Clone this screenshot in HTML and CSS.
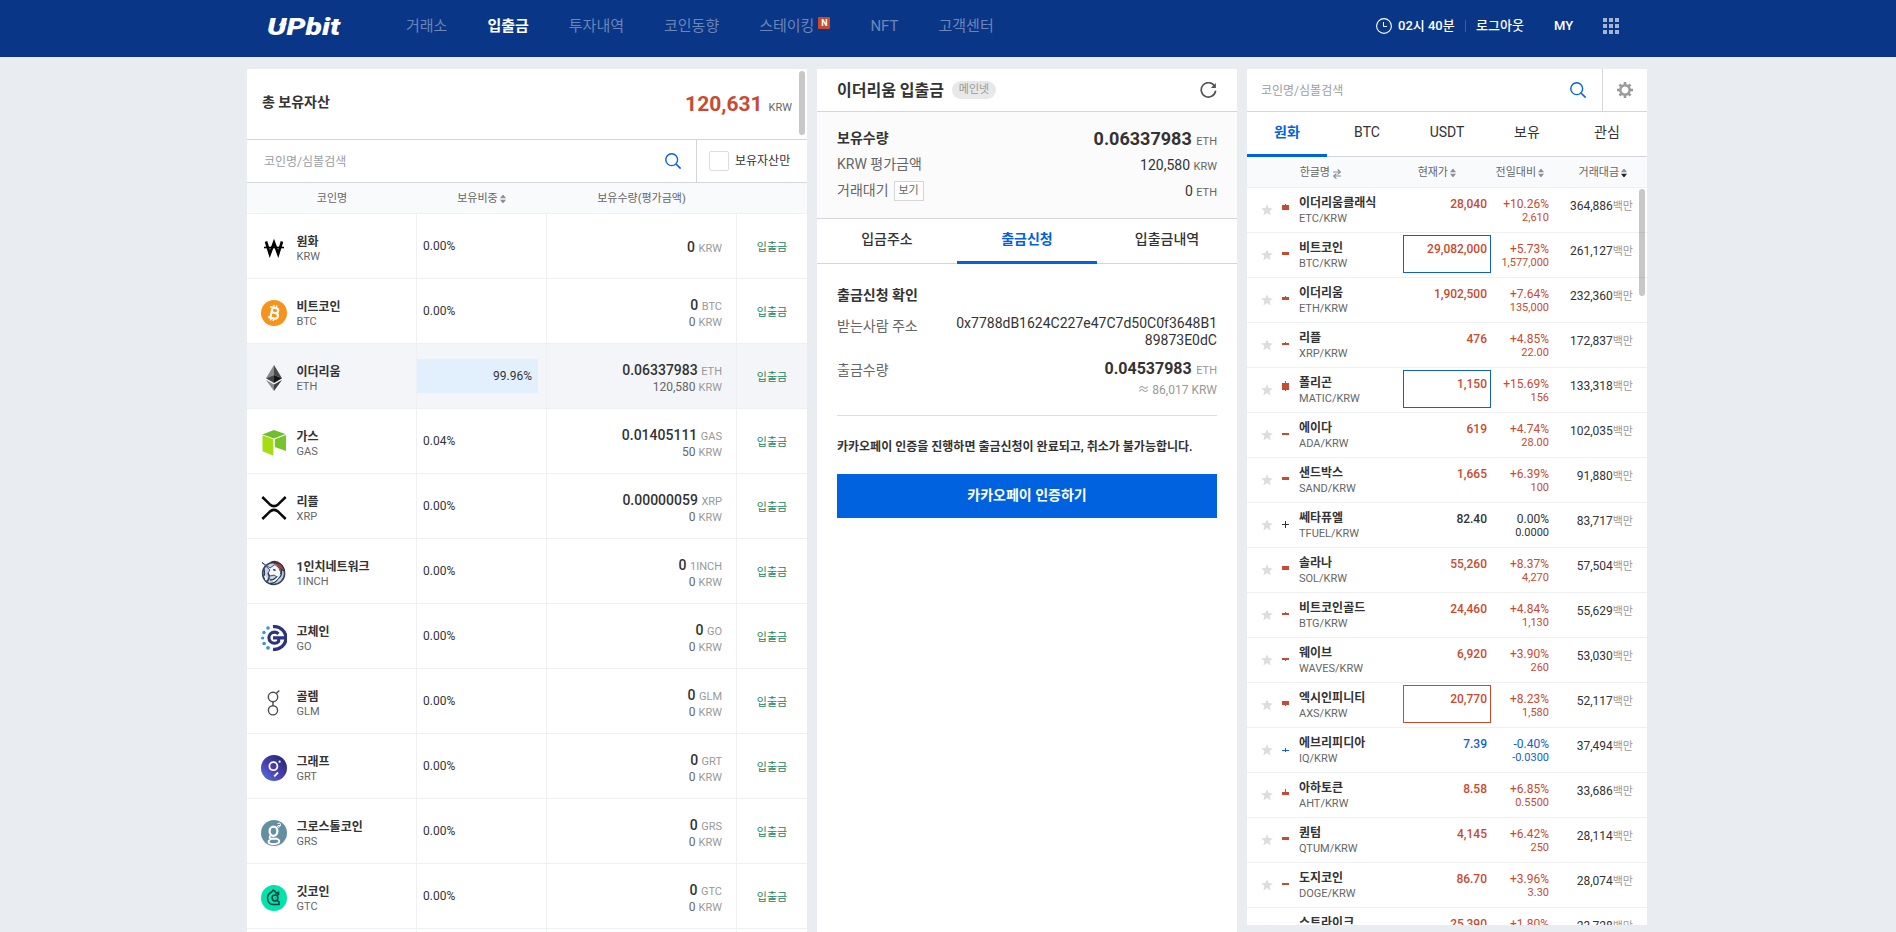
FILE: index.html
```html
<!DOCTYPE html>
<html lang="ko">
<head>
<meta charset="utf-8">
<title>입출금</title>
<link rel="stylesheet" href="styles.css">
</head>
<body>
<svg class="defs" width="0" height="0">
  <symbol id="search" viewBox="0 0 16 16"><circle cx="6.7" cy="6.7" r="5.9" fill="none" stroke="#0062df" stroke-width="1.4"/><path d="M11 11l4.6 4.6" stroke="#0062df" stroke-width="1.6"/></symbol>
  <symbol id="sort" viewBox="0 0 6 8"><path d="M0 3.2L2.5 0h1L6 3.2z" fill="#8e8e99"/><path class="down" d="M0 4.8L2.5 8h1L6 4.8z"/></symbol>
  <symbol id="star" viewBox="0 0 12 12"><path d="M6 .2L7.6 4.1L11.9 4.4L8.6 7.1L9.7 11.5L6 9.1L2.3 11.5L3.4 7.1L.1 4.4L4.4 4.1z" fill="#ddd"/></symbol>
</svg>
<header class="top">
  <div class="logo"><svg width="78" height="28" viewBox="0 0 78 28"><text x="0" y="22.5" textLength="73" lengthAdjust="spacingAndGlyphs">UPbit</text><path d="M11.5 13.5L17 6.5H20L17.5 11.5H20L14.5 18L16 13.5z" fill="#fff"/></svg></div>
  <nav class="menu">
    <a>거래소</a><a class="on">입출금</a><a>투자내역</a><a>코인동향</a><a>스테이킹<i class="new">N</i></a><a>NFT</a><a>고객센터</a>
  </nav>
  <div class="user">
    <svg width="16" height="16" viewBox="0 0 16 16"><circle cx="8" cy="8" r="7.4" fill="none" stroke="#fff" stroke-width="1.1"/><path d="M7.5 4v4.5h3.5" fill="none" stroke="#fff"/></svg>
    <b class="time">02시 40분</b><span class="bar"></span><b class="logout">로그아웃</b><b class="my">MY</b>
    <svg class="apps" width="16" height="16" viewBox="0 0 16 16"><path fill="#a5b4d3" d="M0 0h4v4H0zM6 0h4v4H6zM12 0h4v4h-4zM0 6h4v4H0zM6 6h4v4H6zM12 6h4v4h-4zM0 12h4v4H0zM6 12h4v4H6zM12 12h4v4h-4z"/></svg>
  </div>
</header>
<main class="page">
<section class="panel assets">
  <div class="scroll s1"></div>
  <div class="total"><strong>총 보유자산</strong><p><b>120,631</b><span>KRW</span></p></div>
  <div class="find"><div class="field"><span>코인명/심볼검색</span><svg width="16" height="16"><use href="#search"/></svg></div><label><i></i>보유자산만</label></div>
  <div class="arow ahead"><span>코인명</span><span>보유비중<svg class="sort" width="6" height="8"><use href="#sort"/></svg></span><span>보유수량(평가금액)</span><span></span></div>

  <div class="arow"><div class="coin"><svg width="26" height="26" viewBox="0 0 26 26"><path d="M5 6.5L8.8 19L13 7.5L17.2 19L21 6.5" fill="none" stroke="#000" stroke-width="2.6"/><path d="M3 12.5h20" stroke="#000" stroke-width="1.6"/></svg><p><b>원화</b><span>KRW</span></p></div><div class="rate">0.00%</div><div class="amt"><p>0 <i>KRW</i></p></div><div class="act">입출금</div></div>
  <div class="arow"><div class="coin"><svg width="26" height="26" viewBox="0 0 26 26"><circle cx="13" cy="13" r="13" fill="#f7931a"/><g transform="rotate(13 13 13)" fill="none" stroke="#fff"><path d="M10.4 7.6v10.8M8 7.9h6.2a2.4 2.4 0 0 1 0 4.9h-3.6M10.6 12.8h4.2a2.7 2.7 0 0 1 0 5.4H8" stroke-width="2.1"/><path d="M11.3 5v2.8M14 5v2.8M11.3 18v3M14 18v3" stroke-width="1.5"/></g></svg><p><b>비트코인</b><span>BTC</span></p></div><div class="rate">0.00%</div><div class="amt"><p>0 <i>BTC</i></p><p class="krw">0 <i>KRW</i></p></div><div class="act">입출금</div></div>
  <div class="arow sel"><div class="coin"><svg width="26" height="26" viewBox="0 0 26 26"><path d="M13 0L5 13.2L13 10z" fill="#8a8a8a"/><path d="M13 0L21 13.2L13 10z" fill="#4a4a4a"/><path d="M5 13.2L13 10V18z" fill="#454545"/><path d="M21 13.2L13 10V18z" fill="#141418"/><path d="M5 15L13 19.6V26z" fill="#8a8a8a"/><path d="M21 15L13 19.6V26z" fill="#404040"/></svg><p><b>이더리움</b><span>ETH</span></p></div><div class="rate full"><span>99.96%</span></div><div class="amt"><p>0.06337983 <i>ETH</i></p><p class="krw">120,580 <i>KRW</i></p></div><div class="act">입출금</div></div>
  <div class="arow"><div class="coin"><svg width="26" height="26" viewBox="0 0 26 26"><path d="M1.5 4.4L12.8 0L24.5 4L13 8.5z" fill="#6fbf2c"/><path d="M1.5 5.2L12.3 9.3V25.8L1.5 21.2z" fill="#a6dc13"/><path d="M25 5V21L13.8 17V9.2z" fill="#78c52b"/></svg><p><b>가스</b><span>GAS</span></p></div><div class="rate">0.04%</div><div class="amt"><p>0.01405111 <i>GAS</i></p><p class="krw">50 <i>KRW</i></p></div><div class="act">입출금</div></div>
  <div class="arow"><div class="coin"><svg width="26" height="26" viewBox="0 0 26 26" fill="none" stroke="#0a0a0a" stroke-width="2.5"><path d="M1.3 2L8.6 9.2Q13 13 17.4 9.2L24.7 2M1.3 24L8.6 16.8Q13 13 17.4 16.8L24.7 24"/></svg><p><b>리플</b><span>XRP</span></p></div><div class="rate">0.00%</div><div class="amt"><p>0.00000059 <i>XRP</i></p><p class="krw">0 <i>KRW</i></p></div><div class="act">입출금</div></div>
  <div class="arow"><div class="coin"><svg width="26" height="26" viewBox="0 0 26 26"><circle cx="12.6" cy="13.4" r="11" fill="#c9d2dd" stroke="#33435c" stroke-width="1.5"/><path d="M9 2Q15 -1 20 3.5Q24 7 24 12L20 10L16 5z" fill="#3d3440"/><path d="M13 2.5L20 5L23 10L18.5 8z" fill="#a5403a"/><path d="M1 2.5L9 8L14 4.5L18 8L20 13L16 17L13 15L9 16L7 13L9 10z" fill="#f5f8fb" stroke="#2e405c" stroke-width=".9"/><path d="M7 13Q10 19 5 22M20 9Q22 16 17 18.5Q15 23 9 23.5M16 17Q13 20 9 20M3 9Q4 15 2.5 17" fill="none" stroke="#2b3d5a" stroke-width="1.4"/><path d="M3.5 16Q6 18 4.5 20M18.5 14Q17 19 12 21.5" fill="none" stroke="#f5f8fb" stroke-width="1.4"/><path d="M12.3 9.5l2.2.8" stroke="#222" stroke-width="1.4"/></svg><p><b>1인치네트워크</b><span>1INCH</span></p></div><div class="rate">0.00%</div><div class="amt"><p>0 <i>1INCH</i></p><p class="krw">0 <i>KRW</i></p></div><div class="act">입출금</div></div>
  <div class="arow"><div class="coin"><svg width="26" height="26" viewBox="0 0 26 26"><path d="M12 1.7a11.4 11.4 0 1 1 0 22.6" fill="none" stroke="#2b3280" stroke-width="3.3"/><path d="M17.5 8.8A5.6 5.6 0 1 0 17.6 16.5L17.8 13M12 12.9H24" fill="none" stroke="#2b3280" stroke-width="3.1"/><g fill="#3597d6"><circle cx="7" cy="3" r="1.8"/><circle cx="3" cy="7.5" r="1.7"/><circle cx="1.6" cy="13" r="1.6"/><circle cx="3.1" cy="18.5" r="1.8"/><circle cx="7" cy="22.8" r="1.9"/></g></svg><p><b>고체인</b><span>GO</span></p></div><div class="rate">0.00%</div><div class="amt"><p>0 <i>GO</i></p><p class="krw">0 <i>KRW</i></p></div><div class="act">입출금</div></div>
  <div class="arow"><div class="coin"><svg width="26" height="26" viewBox="0 0 26 26" fill="none" stroke="#4c4c4c" stroke-width="1.4"><circle cx="12" cy="7" r="4.7"/><circle cx="12" cy="20.3" r="4.6"/><path d="M12 11.7v4M15.2 3.6L18.3 .5"/></svg><p><b>골렘</b><span>GLM</span></p></div><div class="rate">0.00%</div><div class="amt"><p>0 <i>GLM</i></p><p class="krw">0 <i>KRW</i></p></div><div class="act">입출금</div></div>
  <div class="arow"><div class="coin"><svg width="26" height="26" viewBox="0 0 26 26"><defs><linearGradient id="g" x1="0" y1="1" x2=".8" y2=".1"><stop offset="0" stop-color="#4385dc"/><stop offset=".45" stop-color="#5044bd"/><stop offset="1" stop-color="#292a78"/></linearGradient></defs><circle cx="13" cy="13" r="13" fill="url(#g)"/><g fill="none" stroke="#fff" stroke-width="1.8"><circle cx="12.4" cy="11.2" r="4"/><path d="M13.2 21.3L17 17.5"/></g><circle cx="18.6" cy="6.7" r="1.1" fill="#fff"/></svg><p><b>그래프</b><span>GRT</span></p></div><div class="rate">0.00%</div><div class="amt"><p>0 <i>GRT</i></p><p class="krw">0 <i>KRW</i></p></div><div class="act">입출금</div></div>
  <div class="arow"><div class="coin"><svg width="26" height="26" viewBox="0 0 26 26"><circle cx="13" cy="13" r="13" fill="#648fa1"/><g fill="none" stroke="#fff"><ellipse cx="12.5" cy="11.2" rx="3.9" ry="4.6" stroke-width="2.3"/><path d="M9.5 15.5Q7.5 18 10 18.8H16Q19.5 20 17.5 23Q12 25.5 8 23Q6.5 21 10 19" stroke-width="1.9"/><path d="M15.3 8L17 5.5H19.5M16.5 3.5q3-1.4 3 1t-2.5 3" stroke-width="1"/></g></svg><p><b>그로스톨코인</b><span>GRS</span></p></div><div class="rate">0.00%</div><div class="amt"><p>0 <i>GRS</i></p><p class="krw">0 <i>KRW</i></p></div><div class="act">입출금</div></div>
  <div class="arow"><div class="coin"><svg width="26" height="26" viewBox="0 0 26 26"><circle cx="13" cy="13" r="13" fill="#02e2ac"/><g fill="none" stroke="#0d3d3d" stroke-width="1.5"><path d="M17.5 9.5V7.3L15.2 8.2L14 6.3L12.2 5L10.7 7Q6.2 9 6.6 13.5Q7 19.3 12 19.6H18V16"/><circle cx="14" cy="13" r="2.9"/><path d="M14 13h.5M15.8 10.8L18 9M15.8 15.2L18 17"/></g></svg><p><b>깃코인</b><span>GTC</span></p></div><div class="rate">0.00%</div><div class="amt"><p>0 <i>GTC</i></p><p class="krw">0 <i>KRW</i></p></div><div class="act">입출금</div></div>
  <div class="arow"><div class="coin"></div><div class="rate"></div><div class="amt"></div><div class="act"></div></div>
</section>

<section class="panel detail">
  <div class="title"><h2>이더리움 입출금</h2><span class="net">메인넷</span><svg width="17" height="17" viewBox="0 0 17 17"><path d="M14.7 4.3A7.2 7.2 0 1 0 15.6 8.6" fill="none" stroke="#555" stroke-width="1.7"/><path d="M15.9 .9V6H10.8z" fill="#555"/></svg></div>
  <div class="sum">
    <div class="sline"><strong>보유수량</strong><p><b>0.06337983</b> <i>ETH</i></p></div>
    <div class="sline"><span>KRW 평가금액</span><p>120,580 <i>KRW</i></p></div>
    <div class="sline"><span>거래대기<em>보기</em></span><p>0 <i>ETH</i></p></div>
  </div>
  <div class="tabs t3"><span>입금주소</span><span class="on">출금신청</span><span>입출금내역</span></div>
  <div class="confirm">
    <h3>출금신청 확인</h3>
    <div class="cline addr"><span>받는사람 주소</span><p>0x7788dB1624C227e47C7d50C0f3648B1<br>89873E0dC</p></div>
    <div class="cline qty"><span>출금수량</span><p><b>0.04537983</b> <i>ETH</i><small><i class="approx">≈</i> 86,017 KRW</small></p></div>
    <p class="note">카카오페이 인증을 진행하면 출금신청이 완료되고, 취소가 불가능합니다.</p>
    <button>카카오페이 인증하기</button>
  </div>
</section>

<section class="panel market">
  <div class="scroll s2"></div>
  <div class="find mfind"><div class="field"><span>코인명/심볼검색</span><svg width="16" height="16"><use href="#search"/></svg></div><div class="gear"><svg width="16" height="16" viewBox="-8 -8 16 16"><circle r="4.7" fill="none" stroke="#999" stroke-width="2.4"/><path d="M0-8V-5M0 8V5M-8 0H-5M8 0H5M-5.5-5.5L-3.8-3.8M5.5 5.5L3.8 3.8M-5.5 5.5L-3.8 3.8M5.5-5.5L3.8-3.8" stroke="#999" stroke-width="2.6"/></svg></div></div>
  <div class="tabs t5"><span class="on">원화</span><span>BTC</span><span>USDT</span><span>보유</span><span>관심</span></div>
  <div class="mhead"><span>한글명<svg class="swap" width="8" height="10" viewBox="0 0 8 10"><path d="M0 3H7M4.6 .4L7.3 3L4.6 5.4M8 7H1M3.4 4.8L.7 7L3.4 9.8" fill="none" stroke="#8e8e99" stroke-width="1.2"/></svg></span><span>현재가<svg class="sort" width="6" height="8"><use href="#sort"/></svg></span><span>전일대비<svg class="sort" width="6" height="8"><use href="#sort"/></svg></span><span>거래대금<svg class="sort dark" width="6" height="8"><use href="#sort"/></svg></span></div>
  <div class="mlist">
  <div class="mrow up"><svg class="star"><use href="#star"/></svg><svg class="candle"><path d="M0 17h7v5H0zM3 16h1v1H3z"/></svg><p class="nm"><b>이더리움클래식</b><span>ETC/KRW</span></p><p class="pr">28,040</p><p class="ch">+10.26%<span>2,610</span></p><p class="vol">364,886<i>백만</i></p></div>
  <div class="mrow up"><svg class="star"><use href="#star"/></svg><svg class="candle"><path d="M0 19h7v3H0z"/></svg><p class="nm"><b>비트코인</b><span>BTC/KRW</span></p><p class="pr boxb">29,082,000</p><p class="ch">+5.73%<span>1,577,000</span></p><p class="vol">261,127<i>백만</i></p></div>
  <div class="mrow up"><svg class="star"><use href="#star"/></svg><svg class="candle"><path d="M0 19h7v3H0zM3 18h1v1H3z"/></svg><p class="nm"><b>이더리움</b><span>ETH/KRW</span></p><p class="pr">1,902,500</p><p class="ch">+7.64%<span>135,000</span></p><p class="vol">232,360<i>백만</i></p></div>
  <div class="mrow up"><svg class="star"><use href="#star"/></svg><svg class="candle"><path d="M0 20h7v2H0zM3 19h1v1H3z"/></svg><p class="nm"><b>리플</b><span>XRP/KRW</span></p><p class="pr">476</p><p class="ch">+4.85%<span>22.00</span></p><p class="vol">172,837<i>백만</i></p></div>
  <div class="mrow up"><svg class="star"><use href="#star"/></svg><svg class="candle"><path d="M0 15h7v7H0zM3 13h1v10H3z"/></svg><p class="nm"><b>폴리곤</b><span>MATIC/KRW</span></p><p class="pr boxb">1,150</p><p class="ch">+15.69%<span>156</span></p><p class="vol">133,318<i>백만</i></p></div>
  <div class="mrow up"><svg class="star"><use href="#star"/></svg><svg class="candle"><path d="M0 20h7v2H0z"/></svg><p class="nm"><b>에이다</b><span>ADA/KRW</span></p><p class="pr">619</p><p class="ch">+4.74%<span>28.00</span></p><p class="vol">102,035<i>백만</i></p></div>
  <div class="mrow up"><svg class="star"><use href="#star"/></svg><svg class="candle"><path d="M0 19h7v3H0z"/></svg><p class="nm"><b>샌드박스</b><span>SAND/KRW</span></p><p class="pr">1,665</p><p class="ch">+6.39%<span>100</span></p><p class="vol">91,880<i>백만</i></p></div>
  <div class="mrow"><svg class="star"><use href="#star"/></svg><svg class="candle"><path d="M0 21h7v1H0zM3 18h1v7H3z"/></svg><p class="nm"><b>쎄타퓨엘</b><span>TFUEL/KRW</span></p><p class="pr">82.40</p><p class="ch">0.00%<span>0.0000</span></p><p class="vol">83,717<i>백만</i></p></div>
  <div class="mrow up"><svg class="star"><use href="#star"/></svg><svg class="candle"><path d="M0 18h7v4H0z"/></svg><p class="nm"><b>솔라나</b><span>SOL/KRW</span></p><p class="pr">55,260</p><p class="ch">+8.37%<span>4,270</span></p><p class="vol">57,504<i>백만</i></p></div>
  <div class="mrow up"><svg class="star"><use href="#star"/></svg><svg class="candle"><path d="M0 20h7v2H0zM3 19h1v1H3z"/></svg><p class="nm"><b>비트코인골드</b><span>BTG/KRW</span></p><p class="pr">24,460</p><p class="ch">+4.84%<span>1,130</span></p><p class="vol">55,629<i>백만</i></p></div>
  <div class="mrow up"><svg class="star"><use href="#star"/></svg><svg class="candle"><path d="M0 20h7v2H0zM3 22h1v1H3z"/></svg><p class="nm"><b>웨이브</b><span>WAVES/KRW</span></p><p class="pr">6,920</p><p class="ch">+3.90%<span>260</span></p><p class="vol">53,030<i>백만</i></p></div>
  <div class="mrow up"><svg class="star"><use href="#star"/></svg><svg class="candle"><path d="M0 18h7v4H0zM3 22h1v1H3z"/></svg><p class="nm"><b>엑시인피니티</b><span>AXS/KRW</span></p><p class="pr boxr">20,770</p><p class="ch">+8.23%<span>1,580</span></p><p class="vol">52,117<i>백만</i></p></div>
  <div class="mrow down"><svg class="star"><use href="#star"/></svg><svg class="candle"><path d="M0 22h7v1H0zM3 20h1v4H3z"/></svg><p class="nm"><b>에브리피디아</b><span>IQ/KRW</span></p><p class="pr">7.39</p><p class="ch">-0.40%<span>-0.0300</span></p><p class="vol">37,494<i>백만</i></p></div>
  <div class="mrow up"><svg class="star"><use href="#star"/></svg><svg class="candle"><path d="M0 19h7v3H0zM3 16h1v3H3z"/></svg><p class="nm"><b>아하토큰</b><span>AHT/KRW</span></p><p class="pr">8.58</p><p class="ch">+6.85%<span>0.5500</span></p><p class="vol">33,686<i>백만</i></p></div>
  <div class="mrow up"><svg class="star"><use href="#star"/></svg><svg class="candle"><path d="M0 19h7v3H0z"/></svg><p class="nm"><b>퀀텀</b><span>QTUM/KRW</span></p><p class="pr">4,145</p><p class="ch">+6.42%<span>250</span></p><p class="vol">28,114<i>백만</i></p></div>
  <div class="mrow up"><svg class="star"><use href="#star"/></svg><svg class="candle"><path d="M0 20h7v2H0z"/></svg><p class="nm"><b>도지코인</b><span>DOGE/KRW</span></p><p class="pr">86.70</p><p class="ch">+3.96%<span>3.30</span></p><p class="vol">28,074<i>백만</i></p></div>
  <div class="mrow up"><svg class="star"><use href="#star"/></svg><svg class="candle"></svg><p class="nm"><b>스트라이크</b></p><p class="pr">25,390</p><p class="ch">+1.80%</p><p class="vol">23,728<i>백만</i></p></div>
  </div>
</section>
</main>
</body>
</html>
```

FILE: styles.css
```css
* { box-sizing: border-box; margin: 0; padding: 0; }
body { width: 1896px; height: 932px; overflow: hidden; background: #e9ecf1; color: #333; font: 12px/16px Roboto, "Noto Sans CJK KR", sans-serif; }
i, em { font-style: normal; }
svg { flex: none; }
.defs { position: absolute; }

.top { height: 57px; background: #093687; display: flex; align-items: center; padding: 0 277px 13px 267px; color: #fff; }
.logo { width: 139px; height: 28px; margin-top: 7px; }
.logo text { font: italic 900 23px Roboto, sans-serif; fill: #fff; }
.menu { display: flex; gap: 40px; font-size: 15px; line-height: 20px; padding-top: 8px; flex: 1; color: #6b86b7; }
.menu .on { color: #fff; font-weight: 700; }
.menu a { display: flex; }
.new { width: 12px; height: 12px; margin: 1px 0 0 4px; background: #c84a31; border-radius: 1px; color: #fff; font-size: 9px; line-height: 12px; font-weight: 700; text-align: center; }
.user { display: flex; align-items: center; font-size: 13px; padding-top: 8px; line-height: 18px; }
.user b { font-weight: 500; }
.time { margin-left: 6px; width: 58px; white-space: nowrap; }
.bar { width: 1px; height: 12px; background: #3a5e9f; margin: 0 10px 0 9px; }
.logout { width: 48px; white-space: nowrap; }
.my { margin: 0 30px; width: 19px; }

.page { display: flex; gap: 10px; align-items: flex-start; padding: 12px 0 0 247px; }
.panel { background: #fff; height: 863px; overflow: hidden; position: relative; flex: none; }
.assets { width: 560px; }
.detail { width: 420px; }
.market { width: 400px; height: 856px; }
.scroll { position: absolute; width: 6px; border-radius: 3px; background: rgba(0,0,0,.22); z-index: 2; }
.s1 { right: 2px; top: 2px; height: 64px; }
.s2 { right: 2px; top: 120px; height: 107px; }

.total { height: 71px; border-bottom: 1px solid #d4d6dc; display: flex; justify-content: space-between; align-items: flex-start; padding: 23px 15px 0; }
.total strong { font-size: 14px; line-height: 20px; }
.total p { line-height: 24px; color: #c84a31; display: flex; align-items: baseline; }
.total b { font-size: 21px; }
.total span { font-size: 11px; color: #666; margin-left: 6px; }
.find { display: flex; height: 43px; border-bottom: 1px solid #d4d6dc; }
.find .field { width: 449px; display: flex; justify-content: space-between; align-items: center; padding: 0 15px 0 17px; color: #999ea8; }
.find label { flex: 1; border-left: 1px solid #d4d6dc; display: flex; align-items: center; padding-left: 12px; white-space: nowrap; }
.find label i { width: 20px; height: 20px; border: 1px solid #ddd; border-radius: 2px; margin-right: 6px; }
.field span { padding-top: 1px; }

.arow { display: grid; grid-template-columns: 169px 130px 190px 71px; height: 65px; border-bottom: 1px solid #eff0f3; }
.arow > div + div { border-left: 1px solid #eff0f3; }
.ahead { height: 31px; background: #f9fafc; font-size: 11px; color: #666; }
.ahead span { display: flex; align-items: center; justify-content: center; padding: 2px 0 0 1px; }
.sort { margin-left: 2px; fill: #8e8e99; }
.sort.dark { fill: #222; }
.sel { background: #f4f5f8; }
.coin { display: flex; align-items: center; padding-left: 14px; }
.coin p { margin-left: 9.5px; padding-top: 3px; }
.coin b, .coin span { display: block; line-height: 15px; }
.coin b { line-height: 14px; }
.coin span { font-size: 11px; color: #666; }
.rate { padding: 0 0 0 6px; line-height: 64px; }
.rate.full { padding: 15px 8px 0 0; }
.full span { display: block; height: 34px; line-height: 34px; padding-right: 6px; text-align: right; background: #e2f0fe; }
.amt { display: flex; flex-direction: column; justify-content: center; text-align: right; padding: 1px 14px 0 0; font-size: 14px; line-height: 16px; font-weight: 500; }
.amt i { font-size: 11px; color: #999; font-weight: 400; }
.amt .krw { font-size: 12px; line-height: 15px; color: #666; font-weight: 400; }
.act { text-align: center; line-height: 67px; font-size: 11px; color: #1b8661; }

.title { height: 43px; border-bottom: 1px solid #d4d6dc; display: flex; align-items: center; padding: 0 20px; }
.title h2 { font-size: 16px; line-height: 24px; padding-top: 2px; }
.net { margin-left: 8px; width: 44px; height: 18px; border-radius: 9px; background: #e8e8ea; color: #999; font-size: 11px; line-height: 17px; text-align: center; }
.title svg { margin-left: auto; }
.sum { height: 107px; background: #fbfbfb; border-bottom: 1px solid #d4d6dc; padding: 13px 20px 0; font-size: 14px; }
.sline { display: flex; justify-content: space-between; height: 26px; line-height: 26px; color: #333; }
.sline span { color: #666; }
.sline p { padding-top: 1px; white-space: nowrap; }
.sline i { font-size: 11px; color: #666; }
.sline b { font-size: 18px; margin-right: 1px; }
.sline em { display: inline-block; width: 30px; height: 20px; border: 1px solid #d4d6dc; background: #fff; font-size: 11px; line-height: 18px; text-align: center; margin-left: 5px; vertical-align: middle; }
.tabs { display: grid; height: 45px; border-bottom: 1px solid #d4d6dc; font-size: 14px; font-weight: 500; text-align: center; line-height: 40px; }
.tabs .on { color: #0062df; font-weight: 700; border-bottom: 3px solid #0062df; height: 45px; }
.t3 { grid-template-columns: repeat(3, 1fr); }
.t5 { grid-template-columns: repeat(5, 1fr); font-weight: 400; }
.confirm { padding: 20px 20px 0; font-size: 14px; }
.confirm h3 { font-size: 14px; line-height: 22px; }
.cline { display: flex; justify-content: space-between; text-align: right; }
.cline span { color: #666; }
.addr { padding-top: 8.5px; height: 53px; line-height: 17px; }
.addr span { padding-top: 3px; }
.qty { height: 57px; border-bottom: 1px solid #ddd; line-height: 20px; }
.qty span { padding-top: 1px; }
.qty b { font-size: 16px; margin-right: 1px; }
.qty i { font-size: 11px; color: #999; }
.qty small { display: block; font-size: 12px; line-height: 18px; color: #999; }
.qty .approx { font-family: "Noto Sans CJK KR", sans-serif; font-size: 12px; line-height: 1; }
.note { font-size: 12px; font-weight: 700; line-height: 18px; margin: 22px 0 18px; white-space: nowrap; }
.confirm button { width: 380px; height: 44px; border: 0; background: #0062df; color: #fff; font: 700 14px/42px Roboto, "Noto Sans CJK KR", sans-serif; padding-bottom: 2px; }

.mfind .field { width: 355px; padding: 0 16px 0 14px; }
.gear { flex: 1; border-left: 1px solid #d4d6dc; display: flex; align-items: center; justify-content: center; }
.mhead { height: 31px; background: #f9fafc; border-bottom: 1px solid #eff0f3; display: grid; grid-template-columns: 94px 115px 88px 83px; font-size: 11px; color: #666; text-align: right; }
.mhead span { display: flex; align-items: center; justify-content: flex-end; padding-top: 2px; white-space: nowrap; }
.swap { margin: 2px 0 0 3px; }
.mlist { color: #333; }
.mrow { height: 45px; border-bottom: 1px solid #eff0f3; display: grid; grid-template-columns: 14px 21px 17px 104px 88px 58px 84px; }
.star { grid-column: 2; width: 12px; height: 12px; margin-top: 16px; }
.candle { width: 7px; height: 44px; fill: currentColor; shape-rendering: crispEdges; }
.nm { padding-top: 7px; color: #333; }
.nm b, .nm span { display: block; line-height: 16px; }
.nm span { font-size: 11px; color: #666; }
.pr { height: 38px; margin-top: 2px; padding: 5px 3px 0 0; border: 1px solid transparent; text-align: right; font-weight: 500; }
.boxb { border-color: #1261c4; }
.boxr { border-color: #c84a31; }
.ch { text-align: right; padding-top: 8px; }
.ch span { display: block; font-size: 11px; line-height: 11px; }
.vol { text-align: right; padding-top: 10px; color: #333; }
.vol i { font-size: 11px; color: #999; }
.up { color: #c84a31; }
.down { color: #1261c4; }
```
